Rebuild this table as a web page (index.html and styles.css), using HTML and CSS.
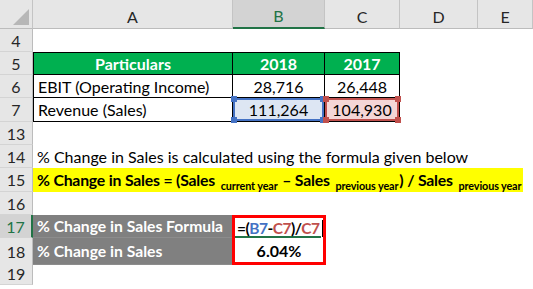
FILE: index.html
```html
<!DOCTYPE html>
<html>
<head>
<meta charset="utf-8">
<link rel="stylesheet" href="styles.css">
</head>
<body>
<div class="sheet">
  <div class="row head">
    <div class="corner"><svg class="tri" width="16" height="16" viewBox="0 0 16 16"><polygon points="16,0 16,16 0,16" fill="#b7b7b7"/></svg></div>
    <div class="ch">A</div>
    <div class="ch sel">B</div>
    <div class="ch">C</div>
    <div class="ch">D</div>
    <div class="ch">E</div>
  </div>

  <div class="row r23">
    <div class="rh">4</div>
    <div class="c"></div>
  </div>

  <div class="row r23">
    <div class="rh">5</div>
    <div class="c t th tl">Particulars</div>
    <div class="c t th">2018</div>
    <div class="c t th">2017</div>
  </div>

  <div class="row r23">
    <div class="rh">6</div>
    <div class="c t tl left">EBIT (Operating Income)</div>
    <div class="c t num">28,716</div>
    <div class="c t num">26,448</div>
  </div>

  <div class="row r24">
    <div class="rh">7</div>
    <div class="c t tl left">Revenue (Sales)</div>
    <div class="c t num ref blue">111,264<i class="h h1"></i><i class="h h2"></i><i class="h h3"></i><i class="h h4"></i></div>
    <div class="c t num ref red">104,930<i class="h h1"></i><i class="h h2"></i><i class="h h3"></i><i class="h h4"></i></div>
  </div>

  <div class="row r23">
    <div class="rh">13</div>
    <div class="c"></div>
  </div>

  <div class="row r23">
    <div class="rh">14</div>
    <div class="c span left">% Change in Sales is calculated using the formula given below</div>
  </div>

  <div class="row r24">
    <div class="rh">15</div>
    <div class="c span"><div class="yellow">% Change in Sales = (Sales <sub>current year</sub> – Sales <sub>previous year</sub>) / Sales <sub>previous year</sub></div></div>
  </div>

  <div class="row r23">
    <div class="rh">16</div>
    <div class="c"></div>
  </div>

  <div class="row r23">
    <div class="rh rsel">17</div>
    <div class="c gray left">% Change in Sales Formula</div>
    <div class="c formula"><span class="ftext"><span>=(</span><span class="fb">B7</span><span>-</span><span class="fr">C7</span><span>)/</span><span class="fr">C7</span></span><span class="caret"></span></div>
  </div>

  <div class="row r24">
    <div class="rh">18</div>
    <div class="c gray left">% Change in Sales</div>
    <div class="c result">6.04%</div>
  </div>

  <div class="row r23">
    <div class="rh">19</div>
    <div class="c"></div>
  </div>
</div>
</body>
</html>
```

FILE: styles.css
```css
* { box-sizing: border-box; }
html, body { margin: 0; padding: 0; background: #fff; }
body {
  font-family: Lato, "Open Sans", sans-serif;
  font-size: 16px;
  color: #000;
  width: 533px;
  height: 289px;
  overflow: hidden;
}
.sheet { display: flex; flex-direction: column; height: 289px; overflow: hidden; }
.row {
  display: grid;
  grid-template-columns: 33px 200px 92px 75px 78px 55px;
  flex: none;
}
.r23 { height: 23px; }
.r24 { height: 24px; }
.head { height: 29px; background: #e6e6e6; }

.corner {
  position: relative;
  border-right: 1px solid #c4c4c4;
  border-bottom: 1px solid #bcbcbc;
}
.tri { position: absolute; right: 3px; bottom: 3px; }
.ch {
  display: flex; align-items: center; justify-content: center;
  padding-top: 4px;
  color: #262626;
  font-size: 16px;
  border-right: 1px solid #c4c4c4;
  border-bottom: 1px solid #bcbcbc;
}
.ch.sel {
  background: #d3d3d3;
  color: #217346;
  border-bottom: 2px solid #217346;
}
.rh {
  display: flex; align-items: center; justify-content: center;
  background: #e6e6e6;
  color: #262626;
  font-size: 16px;
  border-right: 1px solid #bcbcbc;
  border-bottom: 1px solid #d4d4d4;
}
.rh.rsel {
  background: #d3d3d3;
  color: #217346;
  border-right: 2px solid #217346;
}

.c {
  display: flex; align-items: center;
  white-space: nowrap;
  position: relative;
}
.left { padding-left: 4px; }
.t {
  border-right: 1px solid #000;
  border-bottom: 1px solid #000;
}
.tl { border-left: 1px solid #000; }
.th {
  background: #00b050;
  color: #fff;
  font-weight: 700;
  justify-content: center;
  border-top: 1px solid #000;
}
.num { justify-content: center; }
.ref.blue { background: #dde6f3; box-shadow: inset 0 0 0 2px #4472c4; }
.ref.red { background: #f4d6d6; box-shadow: inset 0 0 0 2px #c0504d; }
.h { position: absolute; width: 6px; height: 6px; }
.blue .h { background: #4472c4; }
.red .h { background: #c0504d; }
.h1 { left: -2px; top: -2px; }
.h2 { right: -2px; top: -2px; }
.h3 { left: -2px; bottom: -2px; }
.h4 { right: -2px; bottom: -2px; }

.span { grid-column: 2 / 7; overflow: visible; }
.yellow {
  width: 490px; height: 24px;
  line-height: 24px;
  background: #ffff00;
  font-weight: 700;
  font-size: 15.8px;
  letter-spacing: -0.2px;
  padding-left: 4px;
  white-space: nowrap;
}
.yellow sub {
  font-size: 10.8px;
  letter-spacing: -0.1px;
  vertical-align: -4px;
  margin: 0 1px 0 2px;
  line-height: 1;
}
.gray {
  background: #808080;
  color: #fff;
  font-weight: 700;
  font-size: 15.7px;
  border-bottom: 1px solid #8c8c8c;
}
.formula {
  font-weight: 700;
  font-size: 15.5px;
  letter-spacing: -0.5px;
  padding-left: 2px;
  border: 3px solid #ff0000;
  border-bottom: none;
  margin-left: -1px;
  margin-right: -1px;
  background-image: linear-gradient(#217346, #217346);
  background-size: 86px 2px;
  background-position: 0 100%;
  background-repeat: no-repeat;
}
.fb { color: #4472c4; }
.fr { color: #c0504d; }
.caret {
  display: inline-block;
  width: 1px; height: 17px;
  background: #000;
  margin-left: 2px;
}
.result {
  font-weight: 700;
  justify-content: center;
  border: 3px solid #ff0000;
  border-top: none;
  margin-left: -1px;
  margin-right: -1px;
  height: 27px;
}
```
